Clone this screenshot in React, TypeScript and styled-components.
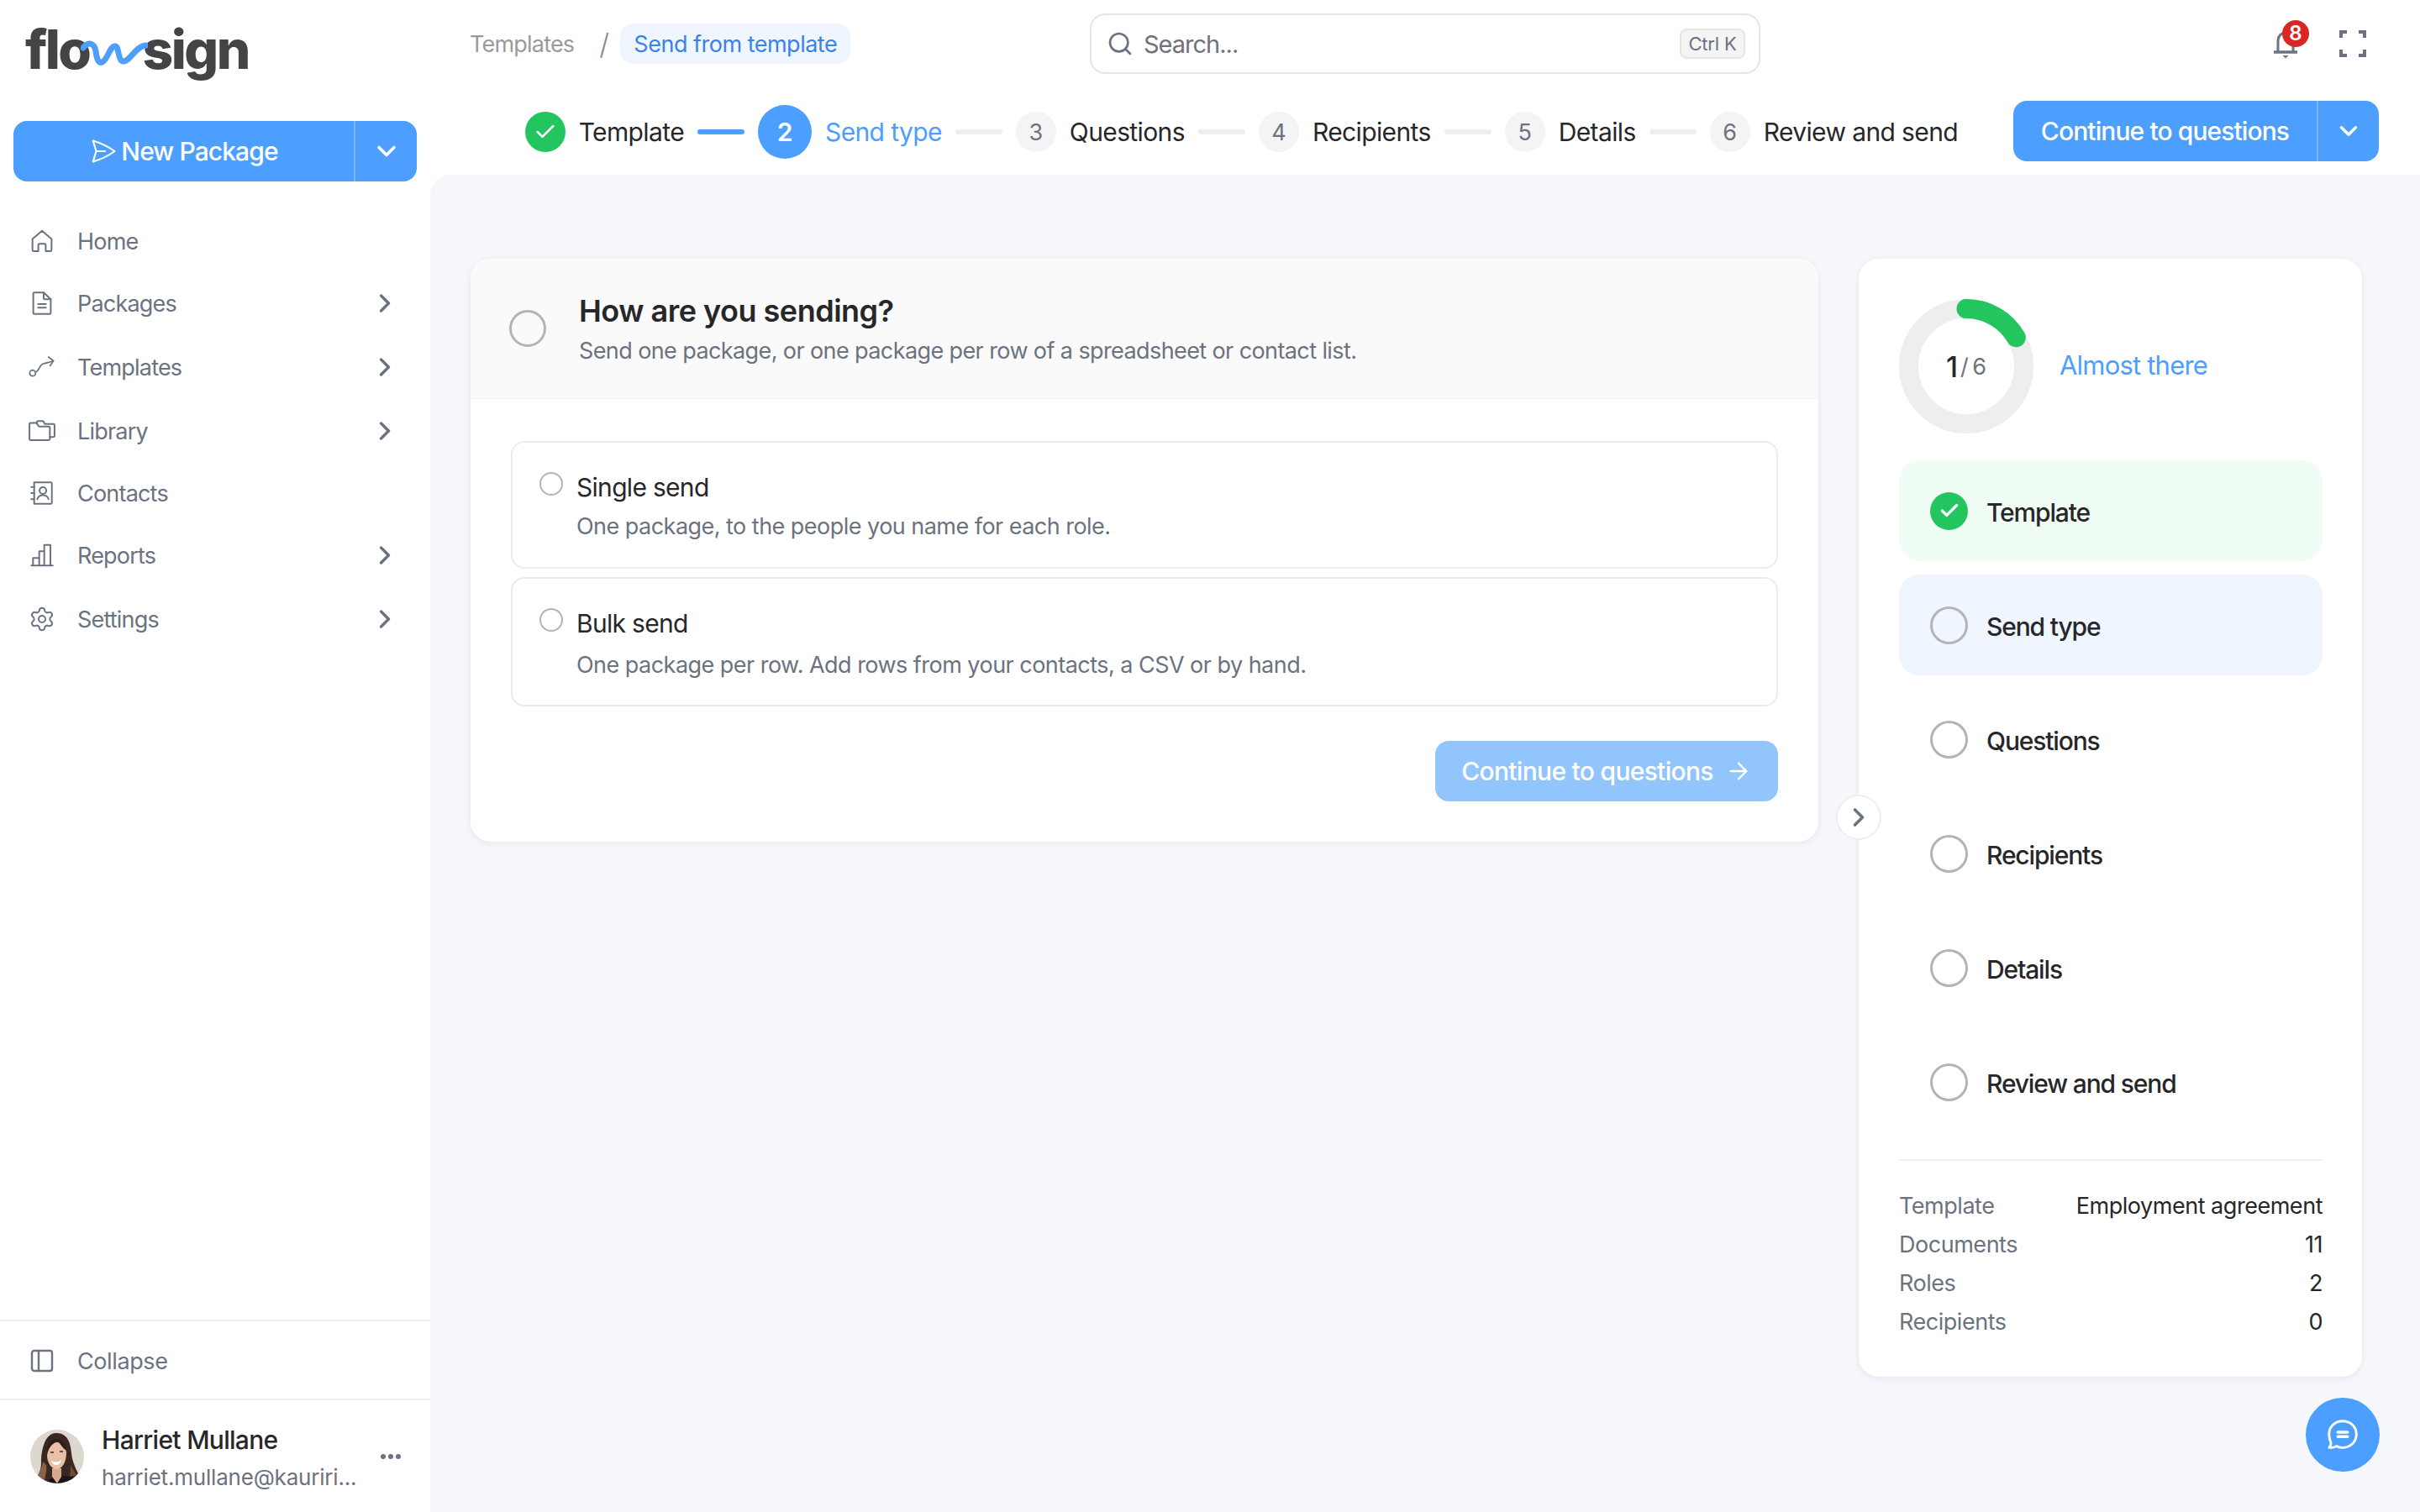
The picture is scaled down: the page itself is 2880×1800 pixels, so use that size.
import React from 'react';
import styled, { createGlobalStyle } from 'styled-components';
import { Check, ChevronDown, ChevronRight, PanelLeft, Search, Settings, ArrowRight } from 'lucide-react';

const GlobalStyle = createGlobalStyle`
  html, body {
    margin: 0;
    padding: 0;
    background: #ffffff;
    font-family: Inter, "Noto Sans", sans-serif;
    color: #27272a;
  }
  * { box-sizing: border-box; }
`;

const Shell = styled.div`
  display: grid;
  grid-template-columns: 512px 1fr;
  width: 2880px;
  height: 1800px;
  overflow: hidden;
  position: relative;
`;

/* sidebar */
const Sidebar = styled.aside`
  display: flex;
  flex-direction: column;
  background: #fff;
`;

const LogoRow = styled.div`
  display: flex;
  align-items: center;
  height: 144px;
  padding: 0 0 26px 30px;
`;

const LogoWord = styled.div`
  display: flex;
  align-items: baseline;
  font-size: 64px;
  line-height: 64px;
  font-weight: 800;
  letter-spacing: -2.5px;
  color: #444446;
`;

const LogoWave = styled.svg`
  width: 80px;
  height: 38px;
  margin: 0 -7px 0 -10px;
  transform: translateY(1px);
`;

const SplitButton = styled.div<{ $width: string; $splitAt: string }>`
  display: grid;
  grid-template-columns: ${({ $splitAt }) => $splitAt} 1fr;
  width: ${({ $width }) => $width};
  height: 72px;
  background: #4c9eff;
  border-radius: 16px;
  color: #fff;
`;

const SplitMain = styled.div`
  display: flex;
  align-items: center;
  justify-content: center;
  gap: 4px;
  font-size: 30px;
  font-weight: 500;
  letter-spacing: -0.9px;
  border-right: 2px solid #7ab7ff;
`;

const SplitCaret = styled.div`
  display: flex;
  align-items: center;
  justify-content: center;
`;

const NewPackageWrap = styled.div`
  padding-left: 16px;
`;

const Nav = styled.nav`
  display: flex;
  flex-direction: column;
  margin-top: 35px;
`;

const NavItem = styled.div<{ $expandable?: boolean }>`
  display: flex;
  align-items: center;
  height: ${({ $expandable }) => ($expandable ? '76px' : '72px')};
  padding: 0 36px 0 34px;
  color: #6b7280;
  font-size: 27px;
  letter-spacing: -0.8px;
`;

const NavIcon = styled.span`
  display: flex;
  align-items: center;
  justify-content: center;
  width: 32px;
  height: 32px;
  margin-right: 26px;
  color: #6b7280;
  svg { display: block; }
`;

const NavLabel = styled.span`
  flex: 1;
`;

const SidebarSpacer = styled.div`
  flex: 1;
`;

const CollapseRow = styled.div`
  display: flex;
  align-items: center;
  height: 96px;
  padding: 2px 0 0 34px;
  border-top: 2px solid #eeeeee;
  border-bottom: 2px solid #eeeeee;
  color: #6b7280;
  font-size: 27px;
  letter-spacing: -0.4px;
`;

const UserRow = styled.div`
  display: flex;
  align-items: center;
  height: 133px;
  padding: 0 34px 0 36px;
`;

const Avatar = styled.svg`
  width: 64px;
  height: 64px;
  border-radius: 50%;
  flex-shrink: 0;
`;

const UserText = styled.div`
  display: flex;
  flex-direction: column;
  margin: 4px 0 0 21px;
  width: 305px;
`;

const UserName = styled.div`
  font-size: 30px;
  line-height: 42px;
  font-weight: 500;
  letter-spacing: -0.7px;
  color: #27272a;
`;

const UserMail = styled.div`
  font-size: 26px;
  line-height: 40px;
  color: #6b7280;
  letter-spacing: -0.2px;
  white-space: nowrap;
  margin-top: 4px;
`;

const MoreDots = styled.div`
  display: flex;
  gap: 3px;
  margin-left: 27px;
  span {
    width: 6px;
    height: 6px;
    border-radius: 50%;
    background: #6b7280;
  }
`;

/* top */
const Content = styled.div`
  display: flex;
  flex-direction: column;
  min-width: 0;
`;

const TopRow = styled.header`
  display: grid;
  grid-template-columns: 1fr 798px 1fr;
  align-items: center;
  height: 104px;
`;

const Crumbs = styled.div`
  display: flex;
  align-items: center;
  padding-left: 47px;
  font-size: 27px;
  letter-spacing: -0.8px;
  color: #9a9a9a;
`;

const CrumbSep = styled.span`
  margin: 0 14px 0 30px;
  font-size: 34px;
  color: #8a8a8a;
  font-weight: 300;
`;

const CrumbCurrent = styled.span`
  display: flex;
  align-items: center;
  height: 48px;
  padding: 0 16px;
  border-radius: 16px;
  background: #eff6ff;
  color: #3b82e6;
  letter-spacing: -0.5px;
`;

const SearchBox = styled.div`
  display: flex;
  align-items: center;
  height: 72px;
  padding: 0 16px 0 18px;
  border: 2px solid #e5e5e5;
  border-radius: 18px;
  color: #6b7280;
  font-size: 29px;
  letter-spacing: -1px;
`;

const SearchText = styled.span`
  flex: 1;
  margin-left: 12px;
  color: #71717a;
`;

const Kbd = styled.span`
  display: flex;
  align-items: center;
  justify-content: center;
  width: 78px;
  height: 36px;
  border: 2px solid #e5e5e5;
  border-radius: 8px;
  background: #f4f4f5;
  font-size: 22px;
  letter-spacing: -0.2px;
  color: #6b7280;
`;

const TopIcons = styled.div`
  display: flex;
  align-items: center;
  justify-content: flex-end;
  gap: 50px;
  padding-right: 64px;
`;

const BellWrap = styled.div`
  position: relative;
  width: 28px;
  height: 34px;
  margin-top: 2px;
  color: #6b7280;
  svg { display: block; }
`;

const Badge = styled.span`
  position: absolute;
  top: -12px;
  left: 10px;
  width: 32px;
  height: 32px;
  border-radius: 50%;
  background: #dc2626;
  color: #fff;
  font-size: 24px;
  line-height: 32px;
  font-weight: 600;
  text-align: center;
`;

const MaxIcon = styled.svg`
  display: block;
  width: 32px;
  height: 32px;
  color: #6b7280;
`;

const StepperRow = styled.div`
  display: flex;
  align-items: center;
  justify-content: flex-end;
  height: 104px;
  padding: 0 49px 0 0;
`;

const Steps = styled.ol`
  display: flex;
  align-items: center;
  gap: 16px;
  margin: 0 66px 0 0;
  padding: 2px 0 0;
  list-style: none;
`;

const StepItem = styled.li`
  display: flex;
  align-items: center;
  gap: 16px;
`;

const StepBullet = styled.span<{ $state: 'done' | 'current' | 'todo' }>`
  display: flex;
  align-items: center;
  justify-content: center;
  width: ${({ $state }) => ($state === 'current' ? '64px' : '48px')};
  height: ${({ $state }) => ($state === 'current' ? '64px' : '48px')};
  border-radius: 50%;
  font-size: ${({ $state }) => ($state === 'current' ? '30px' : '27px')};
  font-weight: ${({ $state }) => ($state === 'current' ? 600 : 400)};
  background: ${({ $state }) =>
    $state === 'done' ? '#22c55e' : $state === 'current' ? '#4c9eff' : '#f4f4f5'};
  color: ${({ $state }) => ($state === 'todo' ? '#6b7280' : '#fff')};
`;

const StepLabel = styled.span<{ $current?: boolean }>`
  font-size: 30px;
  font-weight: 400;
  letter-spacing: -0.62px;
  white-space: nowrap;
  color: ${({ $current }) => ($current ? '#4c9eff' : '#27272a')};
`;

const StepLine = styled.span<{ $active?: boolean }>`
  width: 56px;
  height: 6px;
  border-radius: 3px;
  background: ${({ $active }) => ($active ? '#4c9eff' : '#eeeeee')};
`;

/* main */
const Main = styled.main`
  flex: 1;
  display: flex;
  align-items: flex-start;
  gap: 48px;
  padding: 100px 69px 0 48px;
  background: #f5f7fb;
  border-top-left-radius: 24px;
  position: relative;
`;

const Card = styled.section`
  width: 1604px;
  background: #fff;
  border-radius: 24px;
  box-shadow: 0 2px 8px rgba(17, 24, 39, 0.07);
  overflow: hidden;
`;

const CardHeader = styled.div`
  display: flex;
  align-items: center;
  height: 167px;
  padding-left: 46px;
  background: #fafafa;
  border-bottom: 1px solid #f4f4f5;
`;

const HeaderRadio = styled.span`
  width: 44px;
  height: 44px;
  border: 3px solid #b4b4b4;
  border-radius: 50%;
  flex-shrink: 0;
`;

const HeaderText = styled.div`
  margin-left: 39px;
`;

const CardTitle = styled.h2`
  margin: 0 0 5px;
  font-size: 36px;
  line-height: 48px;
  font-weight: 600;
  letter-spacing: -0.5px;
  color: #27272a;
`;

const CardSub = styled.p`
  margin: 0;
  font-size: 27px;
  line-height: 38px;
  letter-spacing: -0.6px;
  color: #6b7280;
`;

const CardBody = styled.div`
  display: flex;
  flex-direction: column;
  padding: 50px 48px 48px;
`;

const Option = styled.label<{ $height: number }>`
  display: grid;
  grid-template-columns: 28px 1fr;
  column-gap: 16px;
  height: ${({ $height }) => $height}px;
  padding: 33px 32px 0;
  border: 2px solid #ececec;
  border-radius: 16px;
  & + & { margin-top: 10px; }
`;

const OptionRadio = styled.span`
  width: 28px;
  height: 28px;
  margin-top: 2px;
  border: 2px solid #b4b4b4;
  border-radius: 50%;
`;

const OptionTitle = styled.div`
  font-size: 30px;
  line-height: 40px;
  letter-spacing: -0.7px;
  color: #27272a;
`;

const OptionDesc = styled.div<{ $gap: number }>`
  margin-top: ${({ $gap }) => $gap}px;
  font-size: 27px;
  line-height: 40px;
  letter-spacing: -0.53px;
  color: #6b7280;
`;

const ContinueButton = styled.button`
  display: flex;
  align-items: center;
  justify-content: center;
  align-self: flex-end;
  gap: 14px;
  width: 408px;
  height: 72px;
  margin-top: 41px;
  border: 0;
  border-radius: 16px;
  background: #93c5fd;
  color: #fff;
  font-family: inherit;
  font-size: 30px;
  font-weight: 500;
  letter-spacing: -0.7px;
`;

const ToggleCircle = styled.div`
  position: absolute;
  left: 1673px;
  top: 738px;
  display: flex;
  align-items: center;
  justify-content: center;
  width: 54px;
  height: 54px;
  border-radius: 50%;
  background: #fff;
  border: 2px solid #eeeeee;
  color: #6b7280;
  z-index: 2;
`;

const Panel = styled.aside`
  width: 599px;
  padding: 48px 47px 42px 48px;
  background: #fff;
  border-radius: 24px;
  box-shadow: 0 2px 8px rgba(17, 24, 39, 0.07);
`;

const RingRow = styled.div`
  display: flex;
  align-items: center;
  gap: 31px;
  margin-bottom: 32px;
`;

const RingWrap = styled.div`
  position: relative;
  width: 160px;
  height: 160px;
  svg { display: block; }
`;

const RingLabel = styled.div`
  position: absolute;
  inset: 0;
  display: flex;
  align-items: center;
  justify-content: center;
  gap: 3px;
  font-size: 34px;
  color: #27272a;
  font-weight: 500;
`;

const RingTotal = styled.span`
  font-weight: 400;
  font-size: 27px;
  word-spacing: -3px;
  color: #71717a;
`;

const RingCaption = styled.div`
  margin-bottom: 3px;
  font-size: 31px;
  letter-spacing: -0.8px;
  color: #4c9eff;
`;

const PanelSteps = styled.div`
  display: flex;
  flex-direction: column;
  gap: 16px;
`;

const PanelStep = styled.div<{ $bg: string }>`
  display: flex;
  align-items: center;
  gap: 22px;
  height: 120px;
  padding-left: 37px;
  border-radius: 24px;
  background: ${({ $bg }) => $bg};
  font-size: 30px;
  font-weight: 500;
  letter-spacing: -1.15px;
  color: #27272a;
`;

const PanelStepText = styled.span`
  margin-top: 3px;
`;

const PanelDot = styled.span<{ $done?: boolean }>`
  display: flex;
  align-items: center;
  justify-content: center;
  width: 45px;
  height: 45px;
  border-radius: 50%;
  border: ${({ $done }) => ($done ? '0' : '3px solid #b4b4b4')};
  background: ${({ $done }) => ($done ? '#22c55e' : 'transparent')};
  color: #fff;
`;

const PanelDivider = styled.div`
  height: 2px;
  margin: 32px 0 31px;
  background: #eeeeee;
`;

const StatRow = styled.div`
  display: flex;
  justify-content: space-between;
  font-size: 27px;
  line-height: 46px;
  letter-spacing: -0.47px;
`;

const StatKey = styled.span`
  color: #6b7280;
`;

const StatValue = styled.span`
  color: #27272a;
`;

const ChatButton = styled.button`
  position: absolute;
  right: 48px;
  bottom: 48px;
  display: flex;
  align-items: center;
  justify-content: center;
  width: 88px;
  height: 88px;
  border: 0;
  border-radius: 50%;
  background: #4c9eff;
  color: #fff;
`;

const stroke = {
  fill: 'none',
  stroke: 'currentColor',
  strokeWidth: 1.5,
  strokeLinecap: 'round' as const,
  strokeLinejoin: 'round' as const,
};

const HomeIcon = () => (
  <svg width="32" height="32" viewBox="0 0 24 24" {...stroke}>
    <path d="M3.500 10.200 12 2.800l8.500 7.400V20a1 1 0 0 1-1 1h-4.200v-5.500a1 1 0 0 0-1-1H9.700a1 1 0 0 0-1 1V21H4.500a1 1 0 0 1-1-1z" />
  </svg>
);

const DocIcon = () => (
  <svg width="32" height="32" viewBox="0 0 24 24" {...stroke}>
    <path d="M13.500 2.500H5a.8.8 0 0 0-.8.8v17.400a.8.8 0 0 0 .8.8h14a.8.8 0 0 0 .8-.8V8.500z" />
    <path d="M13.500 2.500v5.200a.8.8 0 0 0 .8.8h5.500" />
    <path d="M8.500 12.800h7M8.500 16h7" />
  </svg>
);

const RouteIcon = () => (
  <svg width="36" height="36" viewBox="0 0 24 24" {...stroke} strokeWidth={1.3}>
    <circle cx="3.600" cy="17.400" r="2.600" />
    <path d="M6.200 16.600c3.400-.8 3.200-6.200 6.400-7.400 2.600-1 5.400-1.200 9.400-2.600" />
    <path d="M17.800 3l4.400 3.400-3 4.400" />
  </svg>
);

const FoldersIcon = () => (
  <svg width="32" height="32" viewBox="0 0 24 24" {...stroke}>
    <path d="M.8 8v11.200a1 1 0 0 0 1 1H18a1 1 0 0 0 1-1V9a1 1 0 0 0-1-1H9.200L7 4.800H1.800a1 1 0 0 0-1 1z" />
    <path d="M7 4.800 8 3.200h5l1.500 2.600h7.700a1 1 0 0 1 1 1v9.600a1 1 0 0 1-1 1H19" />
  </svg>
);

const ContactsIcon = () => (
  <svg width="32" height="32" viewBox="0 0 24 24" {...stroke}>
    <path d="M5 2.500h15a.8.8 0 0 1 .8.8v17.400a.8.8 0 0 1-.8.8H5z" />
    <circle cx="12.800" cy="9.800" r="3" />
    <path d="M7.800 17.500c.6-2.400 2.600-3.600 5-3.600s4.400 1.200 5 3.600" />
    <path d="M2.400 6.500H5M2.400 12H5M2.400 17.500H5" />
  </svg>
);

const BarsIcon = () => (
  <svg width="32" height="32" viewBox="0 0 24 24" {...stroke}>
    <path d="M2.500 21.200h19" />
    <path d="M4 21V14.500h5.500M9.500 21V8.500H14M14 21V2.800h5.500V21" />
  </svg>
);

const SendIcon = () => (
  <svg width="34" height="34" viewBox="0 0 24 24" {...stroke}>
    <path d="M6 12 3.269 3.125A59.769 59.769 0 0 1 21.485 12 59.768 59.768 0 0 1 3.270 20.875L5.999 12Zm0 0h7.500" />
  </svg>
);

const ChatIcon = () => (
  <svg width="46" height="46" viewBox="0 0 24 24" {...stroke}>
    <path d="M12 3.500c4.800 0 8.500 3.600 8.500 8.200s-3.700 8.300-8.500 8.300c-1.400 0-2.700-.3-3.900-.9-1 .7-2.500 1.100-4.500.9.800-.8 1.200-1.800 1.100-3C3.900 15.400 3.500 13.700 3.500 11.700 3.500 7.100 7.200 3.500 12 3.500z" />
    <path d="M9 10.400h6M9 13.200h6" strokeWidth={1.8} />
  </svg>
);

const BellIcon = () => (
  <svg width="28" height="34" viewBox="0 0 28 34" fill="none" stroke="currentColor" strokeWidth="3">
    <path d="M5 25V12a9 9 0 0 1 18 0v13" />
    <path d="M0 26h28" strokeWidth="3.500" />
    <path d="M10.500 30h7L14 33.500z" fill="currentColor" stroke="none" />
  </svg>
);

const FullscreenIcon = () => (
  <MaxIcon viewBox="0 0 32 32" fill="none" stroke="currentColor" strokeWidth="4">
    <path d="M2 9V2h7M23 2h7v7M30 23v7h-7M9 30H2v-7" />
  </MaxIcon>
);

const Portrait = () => (
  <Avatar viewBox="0 0 64 64">
    <defs>
      <filter id="soft">
        <feGaussianBlur stdDeviation="0.6" />
      </filter>
    </defs>
    <rect width="64" height="64" fill="#dcd8d0" />
    <g filter="url(#soft)">
      <path d="M8 58c3-7 5-11 5-20 0-10 3-34 18-34 13 0 17 11 18 24 1 10 5 18 9 26l-12 10H16z" fill="#3a2820" />
      <path d="M6 60c4-8 8-14 9-22l4 4c1 6-1 14-3 22H8z" fill="#8a6244" />
      <path d="M48 42c2 4 5 8 7 12l-8 8z" fill="#6d4a34" />
      <path d="M16 66c5-7 12-10 18-11 9 0 17 2 24-1l-6 12z" fill="#17161a" />
      <path d="M26 46h11v10l-5 8-6-8z" fill="#d8a78f" />
      <path d="M20 30c0-8 4-14 12-15 6 1 10 5 11 12 0 12-5 20-12 20-6 0-11-8-11-17z" fill="#e9bfa8" />
      <path d="M20 31c1-8 5-14 13-18 3 5 7 10 10 12-1-9-5-14-12-14-8 0-12 8-11 20z" fill="#2e1f19" />
      <path d="M25 37c4 2 9 2 12-1-1 4-3 6-6 6s-5-2-6-5z" fill="#ffffff" />
      <path d="M24 27h4M35 26h4" stroke="#3a2820" strokeWidth="1.600" />
    </g>
  </Avatar>
);

const navItems = [
  { label: 'Home', icon: <HomeIcon /> },
  { label: 'Packages', icon: <DocIcon />, expandable: true },
  { label: 'Templates', icon: <RouteIcon />, expandable: true },
  { label: 'Library', icon: <FoldersIcon />, expandable: true },
  { label: 'Contacts', icon: <ContactsIcon /> },
  { label: 'Reports', icon: <BarsIcon />, expandable: true },
  { label: 'Settings', icon: <Settings size={32} strokeWidth={1.5} />, expandable: true },
];

const wizardSteps = ['Template', 'Send type', 'Questions', 'Recipients', 'Details', 'Review and send'];

const stats = [
  ['Template', 'Employment agreement'],
  ['Documents', '11'],
  ['Roles', '2'],
  ['Recipients', '0'],
];

const App: React.FC = () => {
  return (
    <>
      <GlobalStyle />
      <Shell>
        <Sidebar>
          <LogoRow>
            <LogoWord>
              <span>flo</span>
              <LogoWave viewBox="0 0 80 38" fill="none">
                <path
                  d="M3 12C9 4 16 6 18 16c1 8 3 17 9 12 6-5 8-18 14-18 5 0 3 18 10 18 8 0 15-19 27-19"
                  stroke="#4c9eff"
                  strokeWidth="7"
                  strokeLinecap="round"
                />
              </LogoWave>
              <span>sign</span>
            </LogoWord>
          </LogoRow>
          <NewPackageWrap>
            <SplitButton $width="480px" $splitAt="407px">
              <SplitMain>
                <SendIcon />
                New Package
              </SplitMain>
              <SplitCaret>
                <ChevronDown size={36} strokeWidth={2.4} />
              </SplitCaret>
            </SplitButton>
          </NewPackageWrap>
          <Nav>
            {navItems.map((item) => (
              <NavItem key={item.label} $expandable={item.expandable}>
                <NavIcon>{item.icon}</NavIcon>
                <NavLabel>{item.label}</NavLabel>
                {item.expandable && <ChevronRight size={36} strokeWidth={2.3} />}
              </NavItem>
            ))}
          </Nav>
          <SidebarSpacer />
          <CollapseRow>
            <NavIcon>
              <PanelLeft size={32} strokeWidth={1.8} />
            </NavIcon>
            Collapse
          </CollapseRow>
          <UserRow>
            <Portrait />
            <UserText>
              <UserName>Harriet Mullane</UserName>
              <UserMail>harriet.mullane@kauriri...</UserMail>
            </UserText>
            <MoreDots>
              <span />
              <span />
              <span />
            </MoreDots>
          </UserRow>
        </Sidebar>

        <Content>
          <TopRow>
            <Crumbs>
              Templates
              <CrumbSep>/</CrumbSep>
              <CrumbCurrent>Send from template</CrumbCurrent>
            </Crumbs>
            <SearchBox>
              <Search size={32} strokeWidth={2} />
              <SearchText>Search...</SearchText>
              <Kbd>Ctrl K</Kbd>
            </SearchBox>
            <TopIcons>
              <BellWrap>
                <BellIcon />
                <Badge>8</Badge>
              </BellWrap>
              <FullscreenIcon />
            </TopIcons>
          </TopRow>

          <StepperRow>
            <Steps>
              {wizardSteps.map((label, i) => {
                const state = i === 0 ? 'done' : i === 1 ? 'current' : 'todo';
                return (
                  <React.Fragment key={label}>
                    {i > 0 && <StepLine $active={i === 1} />}
                    <StepItem>
                      <StepBullet $state={state}>
                        {state === 'done' ? <Check size={28} strokeWidth={2.2} /> : i + 1}
                      </StepBullet>
                      <StepLabel $current={state === 'current'}>{label}</StepLabel>
                    </StepItem>
                  </React.Fragment>
                );
              })}
            </Steps>
            <SplitButton $width="435px" $splitAt="363px">
              <SplitMain>Continue to questions</SplitMain>
              <SplitCaret>
                <ChevronDown size={34} strokeWidth={2.4} />
              </SplitCaret>
            </SplitButton>
          </StepperRow>

          <Main>
            <Card>
              <CardHeader>
                <HeaderRadio />
                <HeaderText>
                  <CardTitle>How are you sending?</CardTitle>
                  <CardSub>Send one package, or one package per row of a spreadsheet or contact list.</CardSub>
                </HeaderText>
              </CardHeader>
              <CardBody>
                <Option $height={152}>
                  <OptionRadio />
                  <div>
                    <OptionTitle>Single send</OptionTitle>
                    <OptionDesc $gap={7}>One package, to the people you name for each role.</OptionDesc>
                  </div>
                </Option>
                <Option $height={154}>
                  <OptionRadio />
                  <div>
                    <OptionTitle>Bulk send</OptionTitle>
                    <OptionDesc $gap={10}>One package per row. Add rows from your contacts, a CSV or by hand.</OptionDesc>
                  </div>
                </Option>
                <ContinueButton>
                  Continue to questions
                  <ArrowRight size={32} strokeWidth={1.7} />
                </ContinueButton>
              </CardBody>
            </Card>
            <ToggleCircle>
              <ChevronRight size={36} strokeWidth={2.4} />
            </ToggleCircle>
            <Panel>
              <RingRow>
                <RingWrap>
                  <svg width="160" height="160" viewBox="0 0 160 160">
                    <circle cx="80" cy="80" r="68.500" fill="none" stroke="#eeeeee" strokeWidth="23" />
                    <path
                      d="M80 11.500A68.500 68.500 0 0 1 139.300 45.750"
                      fill="none"
                      stroke="#22c55e"
                      strokeWidth="23"
                      strokeLinecap="round"
                    />
                  </svg>
                  <RingLabel>
                    1<RingTotal>/ 6</RingTotal>
                  </RingLabel>
                </RingWrap>
                <RingCaption>Almost there</RingCaption>
              </RingRow>
              <PanelSteps>
                {wizardSteps.map((label, i) => (
                  <PanelStep key={label} $bg={i === 0 ? '#f0fdf4' : i === 1 ? '#eff6ff' : 'transparent'}>
                    <PanelDot $done={i === 0}>{i === 0 && <Check size={26} strokeWidth={3} />}</PanelDot>
                    <PanelStepText>{label}</PanelStepText>
                  </PanelStep>
                ))}
              </PanelSteps>
              <PanelDivider />
              {stats.map(([key, value]) => (
                <StatRow key={key}>
                  <StatKey>{key}</StatKey>
                  <StatValue>{value}</StatValue>
                </StatRow>
              ))}
            </Panel>
            <ChatButton>
              <ChatIcon />
            </ChatButton>
          </Main>
        </Content>
      </Shell>
    </>
  );
};

export default App;
